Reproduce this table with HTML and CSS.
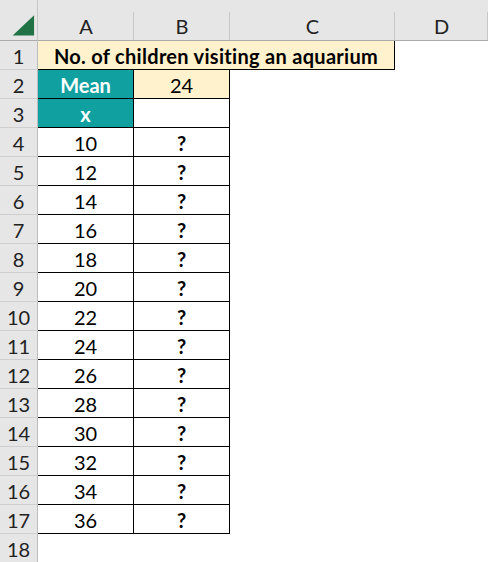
FILE: index.html
```html
<!DOCTYPE html>
<html>
<head>
<meta charset="utf-8">
<link rel="stylesheet" href="styles.css">
</head>
<body>
<div class="sheet">
  <div class="corner"><svg width="38" height="40" viewBox="0 0 38 40"><polygon points="35,15 35,36 13,36" fill="#217346"/></svg></div>
  <div class="ch">A</div><div class="ch">B</div><div class="ch">C</div><div class="ch">D</div>

  <div class="rh">1</div><div class="title">No. of children visiting an aquarium</div><div class="e"></div>

  <div class="rh">2</div><div class="cell teal">Mean</div><div class="cell cream">24</div><div class="e"></div><div class="e"></div>
  <div class="rh">3</div><div class="cell teal">x</div><div class="cell"></div><div class="e"></div><div class="e"></div>
  <div class="rh">4</div><div class="cell">10</div><div class="cell q">?</div><div class="e"></div><div class="e"></div>
  <div class="rh">5</div><div class="cell">12</div><div class="cell q">?</div><div class="e"></div><div class="e"></div>
  <div class="rh">6</div><div class="cell">14</div><div class="cell q">?</div><div class="e"></div><div class="e"></div>
  <div class="rh">7</div><div class="cell">16</div><div class="cell q">?</div><div class="e"></div><div class="e"></div>
  <div class="rh">8</div><div class="cell">18</div><div class="cell q">?</div><div class="e"></div><div class="e"></div>
  <div class="rh">9</div><div class="cell">20</div><div class="cell q">?</div><div class="e"></div><div class="e"></div>
  <div class="rh">10</div><div class="cell">22</div><div class="cell q">?</div><div class="e"></div><div class="e"></div>
  <div class="rh">11</div><div class="cell">24</div><div class="cell q">?</div><div class="e"></div><div class="e"></div>
  <div class="rh">12</div><div class="cell">26</div><div class="cell q">?</div><div class="e"></div><div class="e"></div>
  <div class="rh">13</div><div class="cell">28</div><div class="cell q">?</div><div class="e"></div><div class="e"></div>
  <div class="rh">14</div><div class="cell">30</div><div class="cell q">?</div><div class="e"></div><div class="e"></div>
  <div class="rh">15</div><div class="cell">32</div><div class="cell q">?</div><div class="e"></div><div class="e"></div>
  <div class="rh">16</div><div class="cell">34</div><div class="cell q">?</div><div class="e"></div><div class="e"></div>
  <div class="rh">17</div><div class="cell">36</div><div class="cell q">?</div><div class="e"></div><div class="e"></div>
  <div class="rh">18</div><div class="e"></div><div class="e"></div><div class="e"></div><div class="e"></div>
</div>
</body>
</html>
```

FILE: styles.css
```css
html, body {
  margin: 0;
  padding: 0;
  background: #ffffff;
}

.sheet {
  display: grid;
  grid-template-columns: 38px 96px 96px 165px 1fr;
  grid-template-rows: 41px repeat(18, 29px);
  width: 488px;
  height: 562px;
  overflow: hidden;
  font-family: Lato, "Liberation Sans", sans-serif;
  font-size: 20px;
  color: #000;
}

.sheet > div {
  box-sizing: border-box;
  display: flex;
  align-items: center;
  justify-content: center;
}

.corner {
  background: #e6e6e6;
  border-bottom: 1px solid #ababab;
  border-right: 1px solid #c8c8c8;
}

.corner svg {
  display: block;
}

.ch {
  background: linear-gradient(#c8c8c8, #c8c8c8) right bottom / 1px 28px no-repeat, #e6e6e6;
  border-bottom: 1px solid #ababab;
  color: #222;
  padding-top: 12px;
}

.rh {
  background: #e6e6e6;
  border-right: 1px solid #bdbdbd;
  border-bottom: 1px solid #cfcfcf;
  color: #222;
  padding-top: 1px;
}

.title {
  grid-column: 2 / 5;
  background: #fff2cc;
  border-right: 1px solid #000;
  border-bottom: 1px solid #000;
  font-weight: 700;
  letter-spacing: 0.3px;
  padding-top: 1px;
}

.cell {
  border-right: 1px solid #000;
  border-bottom: 1px solid #000;
  padding-top: 1px;
}

.teal {
  background: #10a0a0;
  color: #ffffff;
  font-weight: 700;
}

.cream {
  background: #fff2cc;
}

.q {
  font-weight: 700;
}
```
